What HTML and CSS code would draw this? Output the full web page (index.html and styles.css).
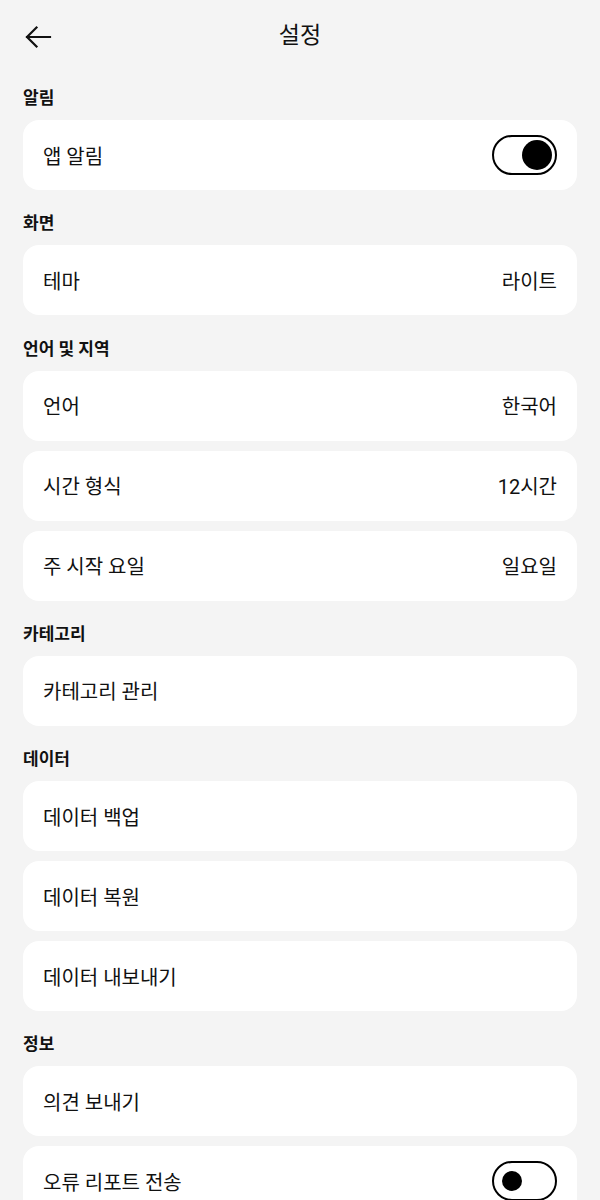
FILE: index.html
```html
<!DOCTYPE html>
<html lang="ko">
<head>
<meta charset="utf-8">
<title>설정</title>
<link rel="stylesheet" href="styles.css">
</head>
<body>
<div class="screen">
  <header class="topbar">
    <button class="back" aria-label="뒤로">
      <svg viewBox="0 0 28 24" width="28" height="24"><path d="M26 12H3M12.5 2.5L3 12l9.5 9.5" fill="none" stroke="#111" stroke-width="2.2" stroke-linecap="square" stroke-linejoin="miter"/></svg>
    </button>
    <h1 class="title">설정</h1>
  </header>
  <main class="content">
    <section class="section">
      <h2 class="section-title">알림</h2>
      <div class="card">
        <span class="label">앱 알림</span>
        <span class="switch on"><span class="knob"></span></span>
      </div>
    </section>
    <section class="section">
      <h2 class="section-title">화면</h2>
      <div class="card"><span class="label">테마</span><span class="value">라이트</span></div>
    </section>
    <section class="section">
      <h2 class="section-title">언어 및 지역</h2>
      <div class="card"><span class="label">언어</span><span class="value">한국어</span></div>
      <div class="card"><span class="label">시간 형식</span><span class="value">12시간</span></div>
      <div class="card"><span class="label">주 시작 요일</span><span class="value">일요일</span></div>
    </section>
    <section class="section">
      <h2 class="section-title">카테고리</h2>
      <div class="card"><span class="label">카테고리 관리</span></div>
    </section>
    <section class="section">
      <h2 class="section-title">데이터</h2>
      <div class="card"><span class="label">데이터 백업</span></div>
      <div class="card"><span class="label">데이터 복원</span></div>
      <div class="card"><span class="label">데이터 내보내기</span></div>
    </section>
    <section class="section">
      <h2 class="section-title">정보</h2>
      <div class="card"><span class="label">의견 보내기</span></div>
      <div class="card">
        <span class="label">오류 리포트 전송</span>
        <span class="switch off"><span class="knob"></span></span>
      </div>
    </section>
  </main>
</div>
</body>
</html>
```

FILE: styles.css
```css
* { box-sizing: border-box; }
html, body {
  margin: 0;
  padding: 0;
  background: #f4f4f4;
}
body {
  font-family: Roboto, "Noto Sans CJK KR", "Noto Sans", sans-serif;
  color: #111;
  width: 600px;
  height: 1200px;
  overflow: hidden;
}
.screen {
  display: flex;
  flex-direction: column;
}
.topbar {
  position: relative;
  height: 74px;
  display: flex;
  align-items: center;
  justify-content: center;
}
.back {
  position: absolute;
  left: 24px;
  top: 25px;
  width: 28px;
  height: 24px;
  padding: 0;
  border: 0;
  background: none;
  display: flex;
}
.title {
  margin: 0 0 2px;
  font-size: 23px;
  font-weight: 400;
  line-height: 30px;
}
.content {
  padding: 14px 23px 0;
  display: flex;
  flex-direction: column;
  gap: 23.28px;
}
.section {
  display: flex;
  flex-direction: column;
  gap: 10px;
}
.section-title {
  margin: 0 0 2px;
  font-size: 17px;
  font-weight: 700;
  line-height: 20px;
}
.card {
  height: 70px;
  background: #fff;
  border-radius: 16px;
  padding: 0 20px;
  display: flex;
  align-items: center;
  justify-content: space-between;
  font-size: 20px;
}
.value { font-size: 20px; }
.switch {
  width: 65px;
  height: 40px;
  border: 2.5px solid #000;
  border-radius: 20px;
  display: flex;
  align-items: center;
  padding: 0 3px;
}
.switch .knob {
  display: block;
  background: #000;
  border-radius: 50%;
}
.switch.on { justify-content: flex-end; }
.switch.on .knob { width: 30px; height: 30px; }
.switch.off { justify-content: flex-start; padding-left: 7.5px; }
.switch.off .knob { width: 20px; height: 20px; }
```
